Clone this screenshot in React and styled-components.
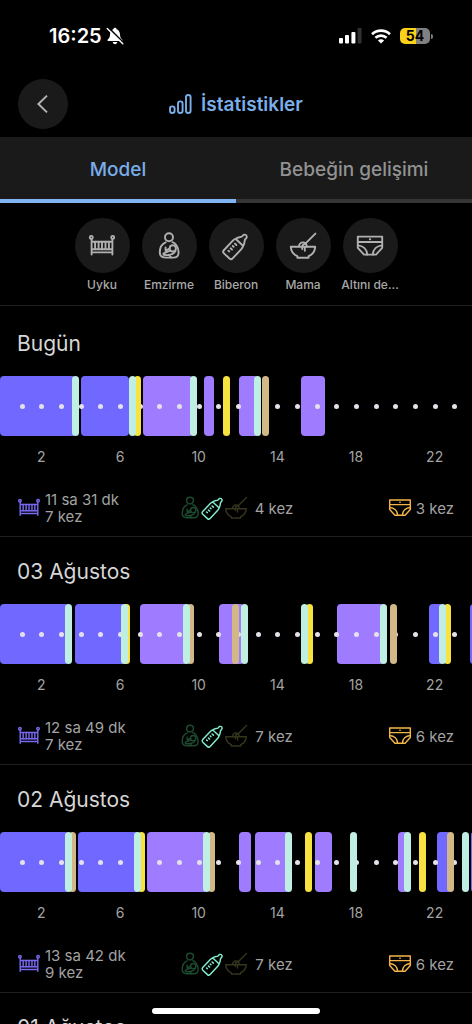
import React, { useState } from "react";
import styled, { createGlobalStyle } from "styled-components";

const GlobalStyle = createGlobalStyle`
  * {
    box-sizing: border-box;
  }
  body {
    margin: 0;
    background: #000;
    color: #a3a3a3;
    font-family: Inter, "Noto Sans", sans-serif;
    -webkit-font-smoothing: antialiased;
  }
  button {
    margin: 0;
    padding: 0;
    border: 0;
    background: none;
    color: inherit;
    font: inherit;
    cursor: pointer;
  }
  h1, h2, p {
    margin: 0;
  }
`;

const Screen = styled.div`
  display: flex;
  flex-direction: column;
  height: 100vh;
  overflow: hidden;
`;

const StatusBar = styled.div`
  display: flex;
  flex: none;
  align-items: center;
  justify-content: space-between;
  height: 72px;
  padding: 0 39px 0 49px;
  color: #fff;
`;

const StatusGroup = styled.div`
  display: flex;
  align-items: center;
  gap: ${(props) => props.$gap}px;
`;

const Clock = styled.time`
  font-size: 20px;
  font-weight: 600;
`;

const Battery = styled.span`
  display: flex;
  align-items: center;
  gap: 1px;

  &::after {
    content: "";
    width: 2px;
    height: 5px;
    border-radius: 0 2px 2px 0;
    background: #7c7c7c;
  }
`;

const BatteryLevel = styled.span`
  width: 30px;
  height: 16px;
  border-radius: 5px;
  background: linear-gradient(to right, #fbd21b 54%, #808080 54%);
  color: #000;
  font-size: 14px;
  font-weight: 700;
  line-height: 16px;
  text-align: center;
`;

const Header = styled.header`
  display: grid;
  flex: none;
  grid-template-columns: 1fr auto 1fr;
  align-items: center;
  padding: 7px 18px 8px;
`;

const BackButton = styled.button`
  display: flex;
  align-items: center;
  justify-content: center;
  width: 50px;
  height: 50px;
  border-radius: 50%;
  background: #1a1a1a;
  color: #b4b4b4;
`;

const PageTitle = styled.h1`
  display: flex;
  align-items: center;
  gap: 9px;
  color: #7aaee9;
  font-size: 19px;
  font-weight: 600;
`;

const Tabs = styled.div`
  display: flex;
  flex: none;
`;

const Tab = styled.button`
  flex: 1;
  height: 66px;
  padding-top: 2px;
  border-bottom: 4px solid ${(props) => (props.$active ? "#80b4f3" : "#353537")};
  background: #1a1a1a;
  color: ${(props) => (props.$active ? "#7aaee9" : "#929292")};
  font-size: 19px;
  font-weight: 500;
`;

const Filters = styled.div`
  display: flex;
  flex: none;
  justify-content: center;
  padding: 15px 0 12px;
  border-bottom: 1px solid #1f1f1f;
`;

const Filter = styled.button`
  display: flex;
  flex-direction: column;
  align-items: center;
  gap: 4px;
  width: 67px;
  color: #a8a8a8;
  font-size: 12px;
  font-weight: 500;
  line-height: 16px;
  white-space: nowrap;
`;

const FilterCircle = styled.span`
  display: flex;
  align-items: center;
  justify-content: center;
  width: 55px;
  height: 55px;
  border-radius: 50%;
  background: #1a1a1a;
`;

const DayList = styled.main`
  flex: 1;
  min-height: 0;
  padding-top: 3px;
  overflow-y: auto;
  scrollbar-width: none;
`;

const DaySection = styled.section`
  padding: 21px 0 11px;
  border-bottom: 1px solid #1f1f1f;
`;

const DayTitle = styled.h2`
  padding: 0 17px;
  color: #d6d6d6;
  font-size: 21px;
  font-weight: 400;
  line-height: 28px;
`;

const Track = styled.div`
  position: relative;
  height: 60px;
  margin-top: 18px;
  overflow: hidden;
`;

const Block = styled.span`
  position: absolute;
  top: 0;
  height: 100%;
  border-radius: 4px;
  background: ${(props) => props.$color};
`;

const Mark = styled(Block)`
  width: 7px;
`;

const Hours = styled.div`
  position: relative;
  display: grid;
  grid-template-columns: repeat(24, 1fr);
  align-items: center;
  height: 100%;
`;

const HourDot = styled.span`
  width: 5px;
  height: 5px;
  border-radius: 50%;
  background: #e6e0ea;

  &:first-child {
    visibility: hidden;
  }
`;

const HourLabels = styled.div`
  display: grid;
  grid-template-columns: repeat(6, 1fr);
  margin-top: 11px;
  font-size: 14px;
  line-height: 20px;
  text-align: center;
`;

const HourLabel = styled.span`
  padding-left: 4px;
`;

const Summary = styled.div`
  display: grid;
  grid-template-columns: 1fr auto 1fr;
  align-items: center;
  margin-top: 24px;
  padding: 0 18px;
  font-size: 15px;
  line-height: 17px;
`;

const SummaryItem = styled.div`
  display: flex;
  align-items: center;
  justify-content: ${(props) => (props.$end ? "flex-end" : "flex-start")};
  gap: 5px;
`;

const FeedIcons = styled.span`
  display: flex;
  gap: 1px;
  margin-right: 3px;
`;

const Icon = styled.svg`
  flex: none;
  width: ${(props) => (props.$small ? 22 : 26)}px;
  height: ${(props) => (props.$small ? 22 : 26)}px;
  overflow: visible;
  fill: none;
  stroke: ${(props) => props.$color || "#b0b0b0"};
  stroke-width: ${(props) => (props.$small ? 1.7 : 1.9)};
  stroke-linecap: round;
  stroke-linejoin: round;
`;

const HomeIndicator = styled.div`
  position: fixed;
  bottom: 10px;
  left: 50%;
  width: 168px;
  height: 6px;
  margin-left: -84px;
  border-radius: 3px;
  background: #fff;
`;

const CotIcon = (props) => (
  <Icon viewBox="0 0 26 26" {...props}>
    <circle cx="2.3" cy="4.4" r="1.5" />
    <circle cx="23.7" cy="4.4" r="1.5" />
    <path d="M2.6 6.2V21.6M23.4 6.2V21.6M2.6 8.8H23.4M2.6 16.2H23.4M2.6 19.4H23.4" />
    <path d="M6.1 8.8V16.2M9.6 8.8V16.2M13 8.8V16.2M16.5 8.8V16.2M19.9 8.8V16.2" />
  </Icon>
);

const NursingIcon = (props) => (
  <Icon viewBox="0 0 26 26" {...props}>
    <circle cx="13" cy="4.2" r="4" />
    <path d="M9.6 9.3C6 10.8 3.8 15 3.8 19.4C3.8 23 6.6 24.6 10.2 24.6H17.4C20.8 24.6 22.6 22.2 22.6 19.2C22.6 16.6 21.8 14.2 20.4 12.2C19.2 10.4 18 9.6 16.4 9.2" />
    <circle cx="16.8" cy="15.4" r="3.1" />
    <path d="M9.6 14.4V17.8L13 15.8M13.6 17.8C11.6 19.2 9.4 19 7.4 20.6M7.6 21.8C12.4 22.6 16.8 22 19.4 18.2M13 21.8L15 24.4" />
  </Icon>
);

const BottleIcon = (props) => (
  <Icon viewBox="0 0 26 26" {...props}>
    <g transform="rotate(43 13 13)">
      <path d="M8 8H18C18.8 9.2 19 10.4 19 11.6V24.4Q19 26.6 16.8 26.6H9.2Q7 26.6 7 24.4V11.6C7 10.4 7.2 9.2 8 8Z" />
      <path d="M8 8C8 5.2 9.8 4.4 10.8 2.2C11 1.2 10.8 .4 11 -.6Q13 -3 15 -.6C15.2 .4 15 1.2 15.2 2.2C16.2 4.4 18 5.2 18 8" />
      <path d="M10.6 12H12.6M10.6 15.2H11.8M10.6 18.4H12.6M10.6 21.6H11.8" />
    </g>
  </Icon>
);

const BowlIcon = (props) => (
  <Icon viewBox="0 0 26 26" {...props}>
    <path d="M.8 13.8H25.2C24.8 18.6 22.6 21.6 18.6 23.2V24.8H7.4V23.2C3.4 21.6 1.2 18.6 .8 13.8Z" />
    <path d="M25.4 .6L15.6 10.4M9 13.6C9 10.8 11 9.2 13.4 9.4C15.8 9.6 16.8 11.6 16.6 13.6M12.4 13.8C12.4 11.8 14.2 10.8 15.8 10.4M12.2 14V16M14.8 14V17.8" />
  </Icon>
);

const DiaperIcon = (props) => (
  <Icon viewBox="0 0 26 26" {...props}>
    <path d="M.8 3.6H25.2V14.8L19 21.6H7L.8 14.8ZM.8 9H25.2" />
    <path d="M.8 12.4C6.2 12.8 10 16.4 10.2 21.6M25.2 12.4C19.8 12.8 16 16.4 15.8 21.6" />
    <path d="M12.8 6.3H13.2" />
  </Icon>
);

const BellOffIcon = () => (
  <svg width="18" height="18" viewBox="0 0 18 18" fill="#fff">
    <path d="M9 .8C9.9 .8 10.5 1.4 10.6 2.2C12.8 3 13.9 4.8 14 7.4C14.1 10 14.7 11.2 16.2 12.4C16.9 13.2 16.5 14 15.6 14H2.4C1.5 14 1.1 13.2 1.8 12.4C3.3 11.2 3.9 10 4 7.4C4.1 4.8 5.2 3 7.4 2.2C7.5 1.4 8.1 .8 9 .8Z" />
    <path d="M6.7 15H11.3C11 16.4 10.2 17.2 9 17.2C7.8 17.2 7 16.4 6.7 15Z" />
    <path d="M2.4 .6L18 16" stroke="#000" strokeWidth="1.6" />
    <path d="M1.2 1.4L16.8 16.8" stroke="#fff" strokeWidth="1.4" strokeLinecap="round" />
  </svg>
);

const SignalIcon = () => (
  <svg width="23" height="16" viewBox="0 0 23 16" fill="#fff">
    <rect x="0" y="10" width="4" height="5.5" rx="1" />
    <rect x="6" y="7" width="4" height="8.5" rx="1" />
    <rect x="12.4" y="4" width="4" height="11.5" rx="1" />
    <rect x="18.6" y="0" width="4" height="15.5" rx="1" fill="#303030" />
  </svg>
);

const WifiIcon = () => (
  <svg width="20" height="15" viewBox="0 0 20 15" fill="none" stroke="#fff" strokeWidth="2.6">
    <path d="M1 5.2C6 .4 14 .4 19 5.2" />
    <path d="M4.4 8.8C7.6 5.9 12.4 5.9 15.6 8.8" />
    <path d="M10 14.4L6.9 11.4C8.7 9.9 11.3 9.9 13.1 11.4Z" fill="#fff" stroke="none" />
  </svg>
);

const ChartIcon = () => (
  <svg width="23" height="20" viewBox="0 0 23 20" fill="none" stroke="currentColor" strokeWidth="1.9">
    <rect x="1" y="12.4" width="4.6" height="6.6" rx="2.3" />
    <rect x="9" y="7.4" width="4.6" height="11.6" rx="2.3" />
    <rect x="17" y="1" width="4.6" height="18" rx="2.3" />
  </svg>
);

const BackIcon = () => (
  <svg width="12" height="20" viewBox="0 0 12 20" fill="none" stroke="currentColor" strokeWidth="2">
    <path d="M10 1.6L1.4 10L10 18.4" />
  </svg>
);

const COLORS = {
  night: "#7168ff",
  nap: "#9f7cff",
  bottle: "#bfeee2",
  diaper: "#f7e23f",
  food: "#d2b887",
};

const FILTERS = [
  { label: "Uyku", Glyph: CotIcon },
  { label: "Emzirme", Glyph: NursingIcon },
  { label: "Biberon", Glyph: BottleIcon },
  { label: "Mama", Glyph: BowlIcon },
  { label: "Altını de...", Glyph: DiaperIcon },
];

// sleeps are [kind, start, end], marks are [kind, start], all in minutes of the day
const DAYS = [
  {
    title: "Bugün",
    sleeps: [
      ["night", 0, 232],
      ["night", 247, 393],
      ["nap", 436, 588],
      ["nap", 622, 653],
      ["nap", 728, 787],
      ["nap", 918, 992],
    ],
    marks: [
      ["bottle", 220],
      ["diaper", 409],
      ["bottle", 393],
      ["bottle", 580],
      ["diaper", 680],
      ["bottle", 775],
      ["food", 799],
    ],
    sleepTime: "11 sa 31 dk",
    sleepCount: "7 kez",
    feeds: "4 kez",
    diapers: "3 kez",
  },
  {
    title: "03 Ağustos",
    sleeps: [
      ["night", 0, 212],
      ["night", 228, 384],
      ["nap", 427, 573],
      ["nap", 668, 745],
      ["nap", 1028, 1171],
      ["night", 1309, 1351],
      ["night", 1434, 1456],
    ],
    marks: [
      ["bottle", 198],
      ["diaper", 376],
      ["bottle", 369],
      ["food", 571],
      ["bottle", 559],
      ["food", 708],
      ["bottle", 735],
      ["diaper", 935],
      ["bottle", 918],
      ["bottle", 1159],
      ["food", 1190],
      ["diaper", 1355],
      ["bottle", 1339],
    ],
    sleepTime: "12 sa 49 dk",
    sleepCount: "7 kez",
    feeds: "7 kez",
    diapers: "6 kez",
  },
  {
    title: "02 Ağustos",
    sleeps: [
      ["night", 0, 212],
      ["night", 239, 424],
      ["nap", 447, 631],
      ["nap", 728, 766],
      ["nap", 778, 882],
      ["nap", 961, 1013],
      ["nap", 1214, 1245],
      ["night", 1334, 1376],
      ["night", 1436, 1456],
    ],
    marks: [
      ["food", 211],
      ["bottle", 198],
      ["diaper", 420],
      ["bottle", 409],
      ["food", 635],
      ["bottle", 619],
      ["bottle", 869],
      ["diaper", 930],
      ["bottle", 1068],
      ["bottle", 1234],
      ["diaper", 1278],
      ["food", 1364],
      ["bottle", 1409],
    ],
    sleepTime: "13 sa 42 dk",
    sleepCount: "9 kez",
    feeds: "7 kez",
    diapers: "6 kez",
  },
  {
    title: "01 Ağustos",
  },
];

const percent = (minutes) => `${(minutes / 1440) * 100}%`;

const Timeline = ({ sleeps, marks }) => (
  <Track>
    {sleeps.map(([kind, start, end]) => (
      <Block
        key={start}
        $color={COLORS[kind]}
        style={{ left: percent(start), width: percent(end - start) }}
      />
    ))}
    <Hours>
      {Array.from({ length: 24 }, (_, hour) => (
        <HourDot key={hour} />
      ))}
    </Hours>
    {marks.map(([kind, start]) => (
      <Mark key={start} $color={COLORS[kind]} style={{ left: percent(start) }} />
    ))}
  </Track>
);

const Day = ({ day }) => (
  <DaySection>
    <DayTitle>{day.title}</DayTitle>
    {day.sleeps && (
      <>
        <Timeline sleeps={day.sleeps} marks={day.marks} />
        <HourLabels>
          {[2, 6, 10, 14, 18, 22].map((hour) => (
            <HourLabel key={hour}>{hour}</HourLabel>
          ))}
        </HourLabels>
        <Summary>
          <SummaryItem>
            <CotIcon $small $color="#7868ee" />
            <div>
              <p>{day.sleepTime}</p>
              <p>{day.sleepCount}</p>
            </div>
          </SummaryItem>
          <SummaryItem>
            <FeedIcons>
              <NursingIcon $small $color="#1c4a2e" />
              <BottleIcon $small $color="#83edcd" />
              <BowlIcon $small $color="#34351a" />
            </FeedIcons>
            <p>{day.feeds}</p>
          </SummaryItem>
          <SummaryItem $end>
            <DiaperIcon $small $color="#f3b548" />
            <p>{day.diapers}</p>
          </SummaryItem>
        </Summary>
      </>
    )}
  </DaySection>
);

const App = () => {
  const [tab, setTab] = useState("Model");

  return (
    <Screen>
      <GlobalStyle />
      <StatusBar>
        <StatusGroup $gap={4}>
          <Clock>16:25</Clock>
          <BellOffIcon />
        </StatusGroup>
        <StatusGroup $gap={9}>
          <SignalIcon />
          <WifiIcon />
          <Battery>
            <BatteryLevel>54</BatteryLevel>
          </Battery>
        </StatusGroup>
      </StatusBar>
      <Header>
        <BackButton aria-label="Geri">
          <BackIcon />
        </BackButton>
        <PageTitle>
          <ChartIcon />
          İstatistikler
        </PageTitle>
      </Header>
      <Tabs role="tablist">
        {["Model", "Bebeğin gelişimi"].map((name) => (
          <Tab
            key={name}
            role="tab"
            aria-selected={tab === name}
            $active={tab === name}
            onClick={() => setTab(name)}
          >
            {name}
          </Tab>
        ))}
      </Tabs>
      <Filters>
        {FILTERS.map(({ label, Glyph }) => (
          <Filter key={label}>
            <FilterCircle>
              <Glyph />
            </FilterCircle>
            {label}
          </Filter>
        ))}
      </Filters>
      <DayList>
        {DAYS.map((day) => (
          <Day key={day.title} day={day} />
        ))}
      </DayList>
      <HomeIndicator />
    </Screen>
  );
};

export default App;
